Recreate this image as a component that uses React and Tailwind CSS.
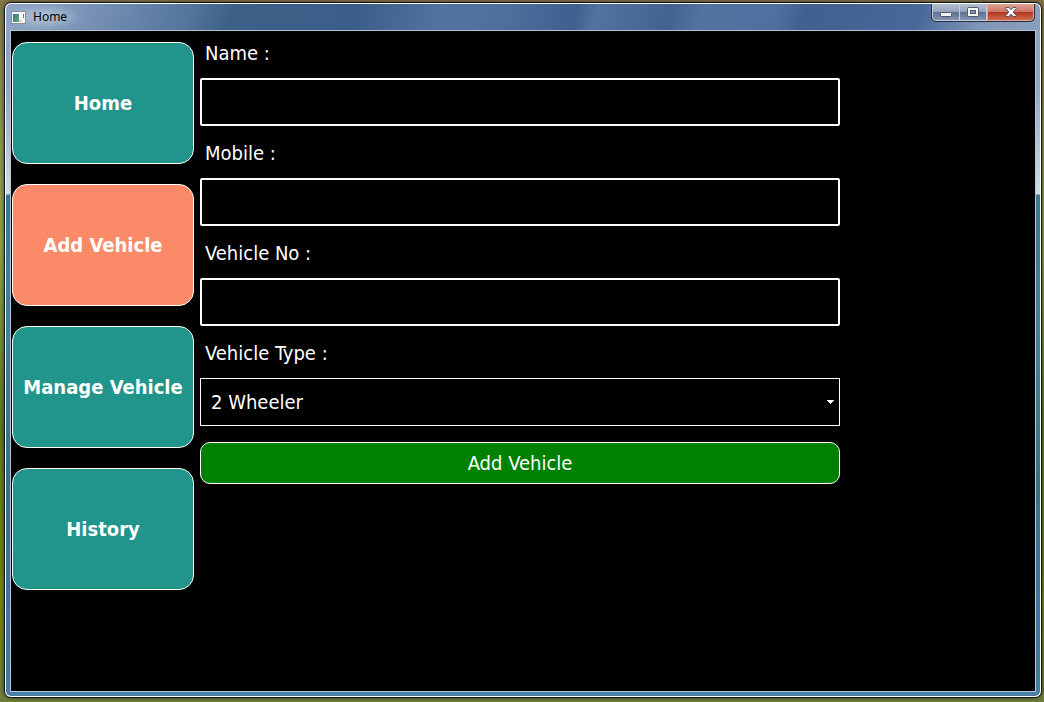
import { useState } from "react";

const NAV_ITEMS = ["Home", "Add Vehicle", "Manage Vehicle", "History"];

function AppIcon() {
  return (
    <svg width="15" height="13" viewBox="0 0 15 13" shapeRendering="crispEdges" aria-hidden="true">
      <defs>
        <linearGradient id="thumb" x1="0" y1="0" x2="1" y2="1">
          <stop offset="0" stopColor="#3d6f9c" />
          <stop offset="1" stopColor="#5fae6c" />
        </linearGradient>
        <linearGradient id="bar" x1="0" y1="0" x2="0" y2="1">
          <stop offset="0" stopColor="#3d6fb0" />
          <stop offset="1" stopColor="#4f9f58" />
        </linearGradient>
      </defs>
      <rect width="15" height="13" fill="#8b8f95" />
      <rect x="1" y="1" width="13" height="11" fill="#f6f7f8" />
      <rect x="2" y="3" width="6" height="8" fill="url(#thumb)" />
      <rect x="12" y="3" width="1" height="4" fill="url(#bar)" />
      <rect x="8" y="9" width="3" height="2" fill="#d0d2d4" />
    </svg>
  );
}

function MinimizeGlyph() {
  return (
    <svg width="12" height="5" viewBox="0 0 12 5" className="mt-1" aria-hidden="true">
      <rect x="0.5" y="0.5" width="11" height="4" rx="1" fill="#f4f4f4" stroke="#525868" />
    </svg>
  );
}

function MaximizeGlyph() {
  return (
    <svg width="12" height="10" viewBox="0 0 12 10" aria-hidden="true">
      <rect x="0.5" y="0.5" width="11" height="9" rx="1" fill="#f4f4f4" stroke="#525868" />
      <rect x="3.5" y="3.5" width="5" height="3" fill="#7f97ba" stroke="#525868" />
    </svg>
  );
}

function CloseGlyph() {
  return (
    <svg width="12" height="10" viewBox="0 0 12 10" aria-hidden="true">
      <path
        d="M1 .5H4L6 2.7L8 .5H11L11.3 1.4L8.2 5L11.3 8.6L11 9.5H8L6 7.3L4 9.5H1L.7 8.6L3.8 5L.7 1.4Z"
        fill="#f8f8f8"
        stroke="#525868"
      />
    </svg>
  );
}

function TitleBar() {
  return (
    <header className="flex h-[26px] items-start justify-between pr-[5px]">
      <div className="flex h-[26px] items-center gap-[7px] bg-[radial-gradient(ellipse_at_center,rgba(210,222,236,0.6),transparent_70%)] pl-[5px] pr-4">
        <AppIcon />
        <h1 className="font-['Noto_Sans',sans-serif] text-xs text-black">Home</h1>
      </div>
      <div className="flex h-[18px] overflow-hidden rounded-b-[5px] border border-t-0 border-[#26303f] bg-[#26303f]">
        <button
          type="button"
          aria-label="Minimize"
          className="flex w-7 items-center justify-center rounded-bl-[4px] border border-t-0 border-[#c3cddc] bg-[linear-gradient(#b3bfd0_0%,#93a3ba_48%,#5b6f90_50%,#8595b2_100%)]"
        >
          <MinimizeGlyph />
        </button>
        <button
          type="button"
          aria-label="Maximize"
          className="flex w-[27px] items-center justify-center border border-l-0 border-t-0 border-[#c3cddc] bg-[linear-gradient(#b3bfd0_0%,#93a3ba_48%,#5b6f90_50%,#8595b2_100%)]"
        >
          <MaximizeGlyph />
        </button>
        <button
          type="button"
          aria-label="Close"
          className="flex w-[47px] items-center justify-center rounded-br-[4px] border border-t-0 border-[#e0a79c] bg-[linear-gradient(#dfa393_0%,#cb7565_48%,#b2341f_50%,#cf6a4c_100%)]"
        >
          <CloseGlyph />
        </button>
      </div>
    </header>
  );
}

function Sidebar({ active, onSelect }) {
  return (
    <nav className="flex w-[182px] shrink-0 flex-col gap-5 pt-2.5">
      {NAV_ITEMS.map((item) => (
        <button
          key={item}
          type="button"
          onClick={() => onSelect(item)}
          aria-current={item === active ? "page" : undefined}
          className={`h-[122px] whitespace-nowrap rounded-[15px] border border-white text-xl font-bold text-white ${
            item === active ? "bg-[#fa8a68]" : "bg-[#21948b]"
          }`}
        >
          {item}
        </button>
      ))}
    </nav>
  );
}

function Field({ id, label, children }) {
  return (
    <div className="flex flex-col gap-1">
      <label htmlFor={id} className="pl-[5px] leading-[42px]">
        {label}
      </label>
      {children}
    </div>
  );
}

function TextField({ id, label }) {
  return (
    <Field id={id} label={label}>
      <input
        id={id}
        type="text"
        className="h-12 w-full rounded-[2px] border-2 border-white bg-black px-2 text-white outline-none"
      />
    </Field>
  );
}

function VehicleForm() {
  return (
    <form className="min-w-0 max-w-[640px] flex-1 text-xl text-white" onSubmit={(e) => e.preventDefault()}>
      <div className="flex flex-col gap-1.5">
        <TextField id="name" label="Name :" />
        <TextField id="mobile" label="Mobile :" />
        <TextField id="vehicle-no" label="Vehicle No :" />
        <Field id="vehicle-type" label="Vehicle Type :">
          <div className="relative">
            <select
              id="vehicle-type"
              className="block h-12 w-full appearance-none border border-white bg-black pl-2.5 pr-6 text-white outline-none"
            >
              <option>2 Wheeler</option>
              <option>4 Wheeler</option>
            </select>
            <svg
              width="7"
              height="4"
              viewBox="0 0 7 4"
              shapeRendering="crispEdges"
              className="pointer-events-none absolute right-1.5 top-[22px]"
              aria-hidden="true"
            >
              <path d="M0 0H7V1H6V2H5V3H4V4H3V3H2V2H1V1H0Z" fill="#fff" />
            </svg>
          </div>
        </Field>
      </div>
      <button type="submit" className="mt-4 h-[42px] w-full rounded-[10px] border border-white bg-[#008000]">
        Add Vehicle
      </button>
    </form>
  );
}

export default function App() {
  const [active, setActive] = useState("Add Vehicle");

  return (
    <div className="flex min-h-screen flex-col bg-[linear-gradient(#857648_0%,#8a9a4a_20%,#8fa349_35%,#5c7a22_60%,#6f8a0c_85%,#6f7f3c_100%)] pb-1 pl-1 pr-0.5 pt-0.5 font-['DejaVu_Sans_Condensed','Noto_Sans',sans-serif]">
      <div className="flex flex-1 flex-col rounded-[7px] border border-[#10161c] bg-white p-px shadow-[0_0_4px_rgba(0,0,0,0.6)]">
        <div className="flex flex-1 flex-col rounded-[5px] bg-[linear-gradient(105deg,#8fa6c6_0%,#7d96b8_7%,#52739c_18%,#3c6088_22%,#3b5e88_34%,#52729f_42%,#4f6f9d_48%,#3f608f_55%,#52729f_57%,#43628f_64%,#52729f_67%,#4f70a0_74%,#41608f_77%,#48689a_88%,#8096b8_94%,#8b9fbe_100%)] bg-[length:100%_27px] bg-no-repeat">
          <TitleBar />
          <div className="flex flex-1 flex-col rounded-b-[5px] bg-[linear-gradient(#8fa3c2_0px,#8fa3c2_50px,#cfdde5_164px,#3f7690_165px,#4a7f98_300px,#3c7085_450px,#4672a0_590px,#427a90_640px,#4a7fa8_100%)] px-1 pb-1">
            <main className="flex flex-1 gap-1.5 border border-[#b4c5d6] bg-black px-px pb-px pt-px">
              <Sidebar active={active} onSelect={setActive} />
              <VehicleForm />
            </main>
          </div>
        </div>
      </div>
    </div>
  );
}
